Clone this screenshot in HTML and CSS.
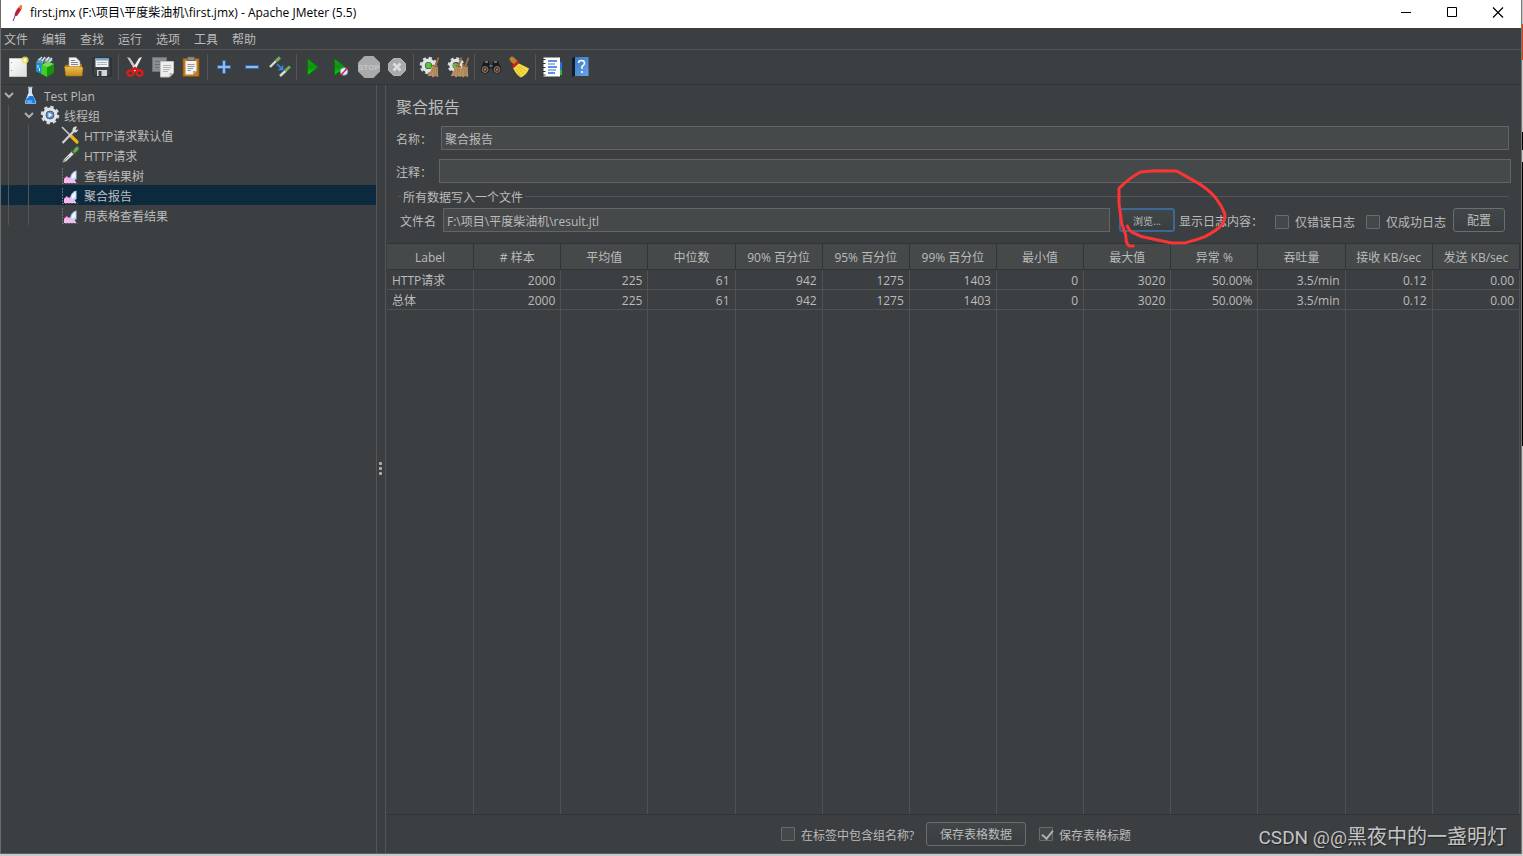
FILE: index.html
```html
<!DOCTYPE html>
<html lang="zh-CN">
<head>
<meta charset="utf-8">
<title>first.jmx - Apache JMeter (5.5)</title>
<link rel="stylesheet" href="styles.css">
</head>
<body>
<svg width="0" height="0" class="defs" aria-hidden="true">
  <defs>
    <linearGradient id="green" x1="0" y1="0" x2="0" y2="1"><stop offset="0" stop-color="#2f9a2f"/><stop offset=".5" stop-color="#0f8f0f"/><stop offset="1" stop-color="#0be00b"/></linearGradient>
    <linearGradient id="paper" x1="0" y1="0" x2="1" y2="1"><stop offset="0" stop-color="#ffffff"/><stop offset="1" stop-color="#dcdcdc"/></linearGradient>
    <linearGradient id="gold" x1="0" y1="0" x2="0" y2="1"><stop offset="0" stop-color="#f0c050"/><stop offset="1" stop-color="#c48a1c"/></linearGradient>
    <linearGradient id="book" x1="0" y1="0" x2="1" y2="1"><stop offset="0" stop-color="#3a78c4"/><stop offset="1" stop-color="#6ba4e8"/></linearGradient>
    <symbol id="gear" viewBox="0 0 20 20">
      <circle cx="10" cy="10" r="8" fill="none" stroke="#d4d8dc" stroke-width="2.600" stroke-dasharray="3.400 2.880"/>
      <circle cx="10" cy="10" r="5.600" fill="none" stroke="#e2e5e8" stroke-width="3.600"/>
    </symbol>
    <symbol id="broom" viewBox="0 0 12 20">
      <path d="M10.800 0.500L8 8" stroke="#a0703c" stroke-width="1.800"/>
      <path d="M5 7L10 8.600L10.500 19L7.500 18L5.500 19.500L4 17.800L0.500 18.400Q4 13 5 7Z" fill="#bd9565"/>
      <path d="M6 10L3.500 17M7.500 10L6.500 18M9 11L8.600 18" stroke="#94704a" stroke-width=".6"/>
      <path d="M5 8L10 9.400" stroke="#7c5830" stroke-width="1"/>
    </symbol>
    <symbol id="chart" viewBox="0 0 20 20">
      <path d="M2.500 3V18.500M2 18.500H18" stroke="#6b6e71" stroke-width="1" stroke-dasharray="2 1"/>
      <path d="M4 18V14L6.500 11.500L9 13L12 13L15 15.500L16.500 18Z" fill="#f6b9ee"/>
      <path d="M4 14L6.500 11.500L9 13L11 12.500" stroke="#dc6fc8" fill="none"/>
      <path d="M10 13Q11 7 16.500 5.500V14L13.500 16Z" fill="#b6d4fb"/>
      <path d="M11.500 13Q12 8.500 15.500 7V12Q13.500 12.500 13 14Z" fill="#f2f8ff"/>
    </symbol>
    <symbol id="pipette" viewBox="0 0 20 20">
      <path d="M2.500 17.500L4 14L11.500 6.500L14 9L6 16.500Z" fill="#dfe4e2" stroke="#555" stroke-width=".6"/>
      <path d="M4 16L9 11" stroke="#8e9693"/>
      <path d="M11 5L16 9.500M12 7.500L14.500 3.500Q17 .5 18.500 2Q20 4 17 6.500L14 8.500Z" fill="#68ae57" stroke="#426f3b"/>
    </symbol>
  </defs>
</svg>

<div class="desktop">
<div class="edge-left"></div>
<div class="window">
  <header class="titlebar">
    <svg class="feather" viewBox="0 0 16 18"><path d="M12 1Q14.500 2 11.500 7L8 12L5.500 11.500Q6 6 12 1Z" fill="#d22128"/><path d="M12 1Q14 2 12 5.500L9 4Z" fill="#f08a24"/><path d="M6 12L4 17M10.500 4L6 12" stroke="#6d2a7d" fill="none"/></svg>
    <h1 class="title">first.jmx (F:\项目\平度柴油机\first.jmx) - Apache JMeter (5.5)</h1>
    <button class="win-btn" aria-label="最小化"><svg viewBox="0 0 12 12"><path d="M1 5.500H11" stroke="#000"/></svg></button>
    <button class="win-btn" aria-label="最大化"><svg viewBox="0 0 12 12"><path d="M1.500 .5H10.500V9.500H1.500Z" stroke="#000" fill="none"/></svg></button>
    <button class="win-btn" aria-label="关闭"><svg viewBox="0 0 12 12"><path d="M1 .5L11 10.500M11 .5L1 10.500" stroke="#000" stroke-width="1.200"/></svg></button>
  </header>

  <nav class="menubar">
    <button>文件</button><button>编辑</button><button>查找</button><button>运行</button><button>选项</button><button>工具</button><button>帮助</button>
  </nav>

  <div class="toolbar" role="toolbar">
    <button aria-label="新建"><svg viewBox="0 0 22 22"><path d="M2.500 2.500H19.500V20.500H2.500Z" fill="url(#paper)" stroke="#c4c4bc"/><path d="M4.500 6V7M4.500 14V15" stroke="#999"/><circle cx="18" cy="4" r="3.600" fill="#ece45c" opacity=".8"/><circle cx="18" cy="4" r="1.600" fill="#fffdd0"/></svg></button>
    <button aria-label="模板"><svg viewBox="0 0 22 22"><path d="M1 7L7 8V18L1 15.500Z" fill="#1f8fd0"/><path d="M1 7L3.500 2L9 4L8 8Z" fill="#5a9fbd"/><path d="M10 2L15 1L18 5L9 7Z" fill="#7c9aa6"/><path d="M4 4L7 1M7 5L10 1M11 5L14 1M14 6L17 2" stroke="#dceaf0" stroke-width="1.300"/><path d="M3 9V12M4.500 12V15" stroke="#d4eefa"/><path d="M6.500 9L12 11.500V21L6.500 18Z" fill="#3fd026"/><path d="M12 11.500L19 8V16.500L12 21Z" fill="#169410"/><path d="M6.500 9L13 5.500L19 8L12 11.500Z" fill="#6fe04c"/></svg></button>
    <button aria-label="打开"><svg viewBox="0 0 22 22"><path d="M2 9V19H19V8H9Z" fill="#a87315"/><path d="M6 1.500H13L17 5.500V14H6Z" fill="#f2f2f2" stroke="#aaa" stroke-width=".6"/><path d="M8 4.500H12M8 6.500H15M8 8.500H15" stroke="#888"/><path d="M1.500 10.500H18.500L20 12L19 20H3Z" fill="url(#gold)" stroke="#a87315" stroke-width=".6"/></svg></button>
    <button aria-label="保存"><svg viewBox="0 0 22 22"><path d="M2 2H20V20H3.500L2 18.500Z" fill="#3d4347" stroke="#25292b"/><path d="M4.500 2H17.500V11H4.500Z" fill="#f1f4f5"/><path d="M4.500 2H17.500V4.500H4.500Z" fill="#7ba3c6"/><path d="M6 6.500H16M6 8.500H16" stroke="#b3b7b9"/><path d="M6 14H16V20H6Z" fill="#d3d6d7"/><path d="M7.500 15H10.500V20H7.500Z" fill="#3d4347"/></svg></button>
    <i class="sep"></i>
    <button aria-label="剪切"><svg viewBox="0 0 22 22"><path d="M3 1L6 2L14.500 14.500L11.500 15.500Z" fill="#c9cccf"/><path d="M18 1L15 2L7.500 14.500L10.500 15.500Z" fill="#eceeef"/><ellipse cx="6.500" cy="17" rx="3" ry="2.700" fill="none" stroke="#e01b1b" stroke-width="2.400"/><ellipse cx="15.500" cy="17" rx="3" ry="2.700" fill="none" stroke="#e01b1b" stroke-width="2.400"/><path d="M8 14.500L11 12L14 14.500" stroke="#d41414" stroke-width="2.400" fill="none"/></svg></button>
    <button aria-label="复制"><svg viewBox="0 0 22 22"><path d="M.5 1.500H14.500V15.500H.5Z" fill="#8b8e90" stroke="#707375"/><path d="M3 5.500H12M3 8.500H12M3 11.500H7" stroke="#6c6f71"/><path d="M8.500 5.500H21.500V17L17.500 21H8.500Z" fill="#eeeeec" stroke="#c0c0bc"/><path d="M11 9.500H19M11 11.500H19M11 13.500H18M11 15.500H16" stroke="#b5b5b5"/><path d="M21.500 17H17.500V21Z" fill="#b8b8b8"/></svg></button>
    <button aria-label="粘贴"><svg viewBox="0 0 22 22"><path d="M3 2.500H19V20.500H3Z" fill="#c07d20" stroke="#855410"/><path d="M5.500 5H16.500V15L13 18.500H5.500Z" fill="#f3f3f1"/><path d="M7.500 8.500H14.500M7.500 10.500H14.500M7.500 12.500H13M7.500 14.500H11" stroke="#9b9b9b"/><path d="M7.500 1H14.500V4.500H7.500Z" fill="#8b8d88" stroke="#5c5e5a" stroke-width=".7"/><path d="M16.500 15H13V18.500Z" fill="#aaa"/></svg></button>
    <i class="sep"></i>
    <button aria-label="展开"><svg viewBox="0 0 22 22"><path d="M9.500 4.500H12.500V9.500H17.500V12.500H12.500V17.500H9.500V12.500H4.500V9.500H9.500Z" fill="#8dbdf0" stroke="#3468aa"/></svg></button>
    <button aria-label="折叠"><svg viewBox="0 0 22 22"><path d="M4.500 9.500H17.500V12.500H4.500Z" fill="#8dbdf0" stroke="#3468aa"/></svg></button>
    <button aria-label="切换"><svg viewBox="0 0 22 22"><path d="M1 11L7 5" stroke="#d5dad7" stroke-width="2.400"/><path d="M7 5L11 1.500" stroke="#71ae5d" stroke-width="3"/><path d="M11 20L17 14.500" stroke="#d5dad7" stroke-width="2.400"/><path d="M16 15L21 10.500" stroke="#71ae5d" stroke-width="3"/><path d="M8 8L13 13M13.500 9.500V13.500H9.500" fill="none" stroke="#3989e8" stroke-width="1.600"/></svg></button>
    <i class="sep"></i>
    <button aria-label="启动"><svg viewBox="0 0 22 22"><path d="M5.500 2.500L16.500 11L5.500 19.500Z" fill="url(#green)" stroke="#087008"/></svg></button>
    <button aria-label="不停顿开始"><svg viewBox="0 0 22 22"><path d="M4.500 2.500L15.500 11L4.500 19.500Z" fill="url(#green)" stroke="#087008"/><circle cx="14" cy="15.500" r="3.800" fill="#e7f0fa" stroke="#6b9bd2"/><path d="M11 19L17.500 12" stroke="#d92424" stroke-width="1.600"/></svg></button>
    <button aria-label="停止" disabled><svg viewBox="0 0 22 22"><path d="M6.500 0H15.500L22 6.500V15.500L15.500 22H6.500L0 15.500V6.500Z" fill="#aaaaaa"/><text x="11" y="14" class="stop-text">STOP</text></svg></button>
    <button aria-label="关闭" disabled><svg viewBox="0 0 22 22"><path d="M7.500 2.500H14.500L19.500 7.500V14.500L14.500 19.500H7.500L2.500 14.500V7.500Z" fill="#aaa" stroke="#b2b2b2"/><path d="M7.500 7.500L14.500 14.500M14.500 7.500L7.500 14.500" stroke="#dedede" stroke-width="2.600"/></svg></button>
    <i class="sep"></i>
    <button aria-label="清除"><svg viewBox="0 0 22 22"><use href="#gear" x="0" y="0" width="19" height="19"/><circle cx="9.500" cy="9.500" r="3" fill="#58c436"/><use href="#broom" x="8" y="1" width="13" height="21"/></svg></button>
    <button aria-label="清除全部"><svg viewBox="0 0 22 22"><use href="#gear" x="0" y="0" width="18" height="19"/><circle cx="8.500" cy="9.500" r="2.600" fill="#58c436"/><use href="#broom" x="3" y="1" width="13" height="21"/><use href="#broom" x="10" y="1" width="13" height="21"/></svg></button>
    <i class="sep"></i>
    <button aria-label="查找"><svg viewBox="0 0 22 22"><path d="M4 5H9L10 9H12L13 5H18L21.500 13Q21 17.500 17 17.500Q12.500 17.500 12 12H10Q9.500 17.500 5 17.500Q1 17.500 .5 13Z" fill="#191b1c"/><path d="M5 6H8M14 6H17" stroke="#8a8a8a" stroke-width="1.500"/><circle cx="5" cy="13.500" r="3" fill="#493227" stroke="#7d7d7d"/><circle cx="17" cy="13.500" r="3" fill="#493227" stroke="#7d7d7d"/><path d="M4 14.500L6 12.500M16 14.500L18 12.500" stroke="#ca7441" stroke-width="1.500"/><path d="M9.500 10H12.500" stroke="#888" stroke-width="1.500"/></svg></button>
    <button aria-label="重置查找"><svg viewBox="0 0 22 22"><path d="M1.500 2.500Q3 -.5 5.500 1L9.500 5L6 8.500L2 5Z" fill="#c08335" stroke="#8a5418" stroke-width=".7"/><path d="M10 7L21 12.500Q19.500 18 13 21.500Q9 20 5 12Z" fill="#f5da42"/><path d="M11 10L18 15M9.500 11L15.500 18M8 12.500L12.500 20" stroke="#d8ae20" stroke-width=".8"/><path d="M5 11L10.500 6" stroke="#d32020" stroke-width="2.600"/></svg></button>
    <i class="sep"></i>
    <button aria-label="函数助手"><svg viewBox="0 0 22 22"><path d="M17 6H21V14H17Z" fill="#2672e0"/><path d="M17 14H21V19H17Z" fill="#37b437"/><path d="M2.500 1.500H19V20.500H2.500Z" fill="#fff"/><path d="M7 5H16M7 11H16M7 17H14" stroke="#2b6bd6" stroke-width="1.500"/><path d="M7 8H14M7 14H15" stroke="#7aa5e6" stroke-width="1.500"/><path d="M1 3.500H4.500M1 7.500H4.500M1 11.500H4.500M1 15.500H4.500M1 19H4.500" stroke="#333" stroke-width="1.200"/></svg></button>
    <button aria-label="帮助"><svg viewBox="0 0 22 22"><path d="M3 2L5 1H19V20H5L3 21Z" fill="#111c2a"/><path d="M6 1H19.500V20H6Z" fill="url(#book)"/><path d="M9.500 7Q9.500 4.500 12.500 4.500Q15.500 4.500 15.500 7.200Q15.500 9 13 10.500V13" fill="none" stroke="#fff" stroke-width="1.500"/><circle cx="13" cy="16" r="1.100" fill="#fff"/></svg></button>
  </div>

  <div class="workspace">
    <aside class="tree" role="tree">
      <div class="node" role="treeitem"><span class="slot"><svg class="chevron" viewBox="0 0 10 10"><path d="M1 3L5 7L9 3"/></svg></span><svg class="icon" viewBox="0 0 20 20"><path d="M8.500 3V8L5 16.500Q4.500 19 6.500 19H14.500Q16.500 19 16 16.500L12 8V3Z" fill="#d5e4f2"/><path d="M7.500 11L5.500 17Q5 18.500 6.500 18.500H14.500Q16 18.500 15.500 17L13.200 11Z" fill="#1f78dc"/><path d="M8 2.500H12.500" stroke="#aac0d2" stroke-width="1.500"/><ellipse cx="9.500" cy="16.500" rx="3" ry="1.500" fill="#5caaf3"/><path d="M9 9L7.500 13" stroke="#fff"/></svg><span class="name">Test Plan</span></div>
      <div class="node" role="treeitem"><i class="guide"></i><span class="slot"><svg class="chevron" viewBox="0 0 10 10"><path d="M1 3L5 7L9 3"/></svg></span><svg class="icon" viewBox="0 0 20 20"><use href="#gear" width="20" height="20"/><circle cx="10" cy="10" r="4" fill="#5c8fca" stroke="#45617f"/><path d="M8.500 7.500L12.500 10L8.500 12.500Z" fill="#e8f2ff"/></svg><span class="name">线程组</span></div>
      <div class="node" role="treeitem"><i class="guide"></i><i class="guide"></i><span class="slot"></span><svg class="icon" viewBox="0 0 20 20"><path d="M2 2L11 11" stroke="#c9cccd" stroke-width="1.500"/><path d="M10.500 10.500L17 17" stroke="#eeb41a" stroke-width="3.200" stroke-linecap="round"/><path d="M2.500 18L14 6" stroke="#cfd2d3" stroke-width="2.200"/><path d="M17 1.500Q12 1 12.500 6Q16 9.500 18.500 4.500L15.500 5Z" fill="#d9dcdd"/></svg><span class="name">HTTP请求默认值</span></div>
      <div class="node" role="treeitem"><i class="guide"></i><i class="guide"></i><span class="slot"></span><svg class="icon"><use href="#pipette"/></svg><span class="name">HTTP请求</span></div>
      <div class="node" role="treeitem"><i class="guide"></i><i class="guide"></i><span class="slot"></span><svg class="icon"><use href="#chart"/></svg><span class="name">查看结果树</span></div>
      <div class="node selected" role="treeitem" aria-selected="true"><i class="guide"></i><i class="guide"></i><span class="slot"></span><svg class="icon"><use href="#chart"/></svg><span class="name">聚合报告</span></div>
      <div class="node" role="treeitem"><i class="guide"></i><i class="guide"></i><span class="slot"></span><svg class="icon"><use href="#chart"/></svg><span class="name">用表格查看结果</span></div>
    </aside>
    <div class="splitter"><i></i><i></i><i></i></div>

    <main class="report">
      <h2 class="heading">聚合报告</h2>
      <div class="field name-field"><label for="name">名称：</label><input id="name" type="text" value="聚合报告"></div>
      <div class="field comment-field"><label for="comment">注释：</label><input id="comment" type="text"></div>
      <div class="group-title"><span>所有数据写入一个文件</span></div>
      <div class="file-row">
        <label for="file">文件名</label>
        <input id="file" type="text" value="F:\项目\平度柴油机\result.jtl">
        <div class="browse-wrap">
          <button class="btn browse">浏览...</button>
          <svg class="scribble" viewBox="105 21 342 252" aria-hidden="true"><path d="M142 198Q148 215 165 221Q182 231 205 234L275 249L318 248Q350 240 375 230Q415 208 425 195Q437 178 434 160Q425 137 408 115Q390 92 362 74L320 50L290 33L225 32L182 36Q150 52 117 85L117 130L125 190L137 225L139 245L146 257L160 258"/></svg>
        </div>
        <span class="log-label">显示日志内容：</span>
        <label class="check"><input type="checkbox"><span>仅错误日志</span></label>
        <label class="check"><input type="checkbox"><span>仅成功日志</span></label>
        <button class="btn config">配置</button>
      </div>
      <div class="table-wrap">
        <table>
          <thead><tr><th>Label</th><th># 样本</th><th>平均值</th><th>中位数</th><th>90% 百分位</th><th>95% 百分位</th><th>99% 百分位</th><th>最小值</th><th>最大值</th><th>异常 %</th><th>吞吐量</th><th>接收 KB/sec</th><th>发送 KB/sec</th></tr></thead>
          <tbody>
            <tr><td>HTTP请求</td><td>2000</td><td>225</td><td>61</td><td>942</td><td>1275</td><td>1403</td><td>0</td><td>3020</td><td>50.00%</td><td>3.5/min</td><td>0.12</td><td>0.00</td></tr>
            <tr><td>总体</td><td>2000</td><td>225</td><td>61</td><td>942</td><td>1275</td><td>1403</td><td>0</td><td>3020</td><td>50.00%</td><td>3.5/min</td><td>0.12</td><td>0.00</td></tr>
            <tr class="filler" aria-hidden="true"><td></td><td></td><td></td><td></td><td></td><td></td><td></td><td></td><td></td><td></td><td></td><td></td><td></td></tr>
          </tbody>
        </table>
      </div>
      <footer class="actions">
        <label class="check"><input type="checkbox"><span>在标签中包含组名称?</span></label>
        <button class="btn save">保存表格数据</button>
        <label class="check"><input type="checkbox" checked><span>保存表格标题</span></label>
        <div class="watermark">CSDN @@<span>黑夜中的一盏明灯</span></div>
      </footer>
    </main>
  </div>
</div>
<div class="edge-right"></div>
</div>
</body>
</html>
```

FILE: styles.css
```css
* { box-sizing: border-box; }
body {
  margin: 0;
  background: #c8c8c8;
  color: #bbbbbb;
  font: 12px/16px "Open Sans", "Noto Sans CJK SC", sans-serif;
}
button, input { font: inherit; color: inherit; }
button { padding: 0; border: 0; background: none; }
.defs { position: absolute; }

.desktop { display: flex; height: 100vh; padding-bottom: 2px; }
.edge-left { width: 1px; background: #6b6b6b; }
.edge-right {
  width: 2px;
  border-left: 1px solid #77787a;
  background: linear-gradient(#c8c8c8 24px, #d8431b 24px 60px, #c8c8c8 60px 132px, #000 132px 150px, #c8c8c8 150px 162px, #000 162px 446px, #c8c8c8 446px);
}
.window {
  flex: 1;
  min-width: 0;
  display: flex;
  flex-direction: column;
  background: #3c3f41;
  border-bottom: 1px solid #5c5f61;
}

.titlebar { display: flex; align-items: center; height: 28px; padding-bottom: 2px; background: #fff; color: #000; }
.feather { width: 16px; height: 18px; margin: 0 5px 0 8px; }
.title { flex: 1; margin: 0; font-size: 12px; font-weight: 400; }
.win-btn { display: flex; justify-content: center; align-items: center; width: 46px; height: 26px; }
.win-btn svg { width: 12px; height: 12px; }

.menubar { display: flex; height: 22px; border-bottom: 1px solid #555555; padding: 2px 0 0 3px; gap: 14px; }

.toolbar { display: flex; align-items: center; height: 35px; padding-left: 3px; border-bottom: 1px solid #323537; }
.toolbar button { display: flex; justify-content: center; width: 28px; }
.toolbar svg { width: 22px; height: 22px; }
.sep { width: 1px; height: 26px; margin: 0 2px; background: #555555; }
.stop-text { font: 700 8px "Liberation Sans", sans-serif; fill: #c6c6c6; text-anchor: middle; }

.workspace { flex: 1; min-height: 0; display: flex; }
.tree { width: 375px; }
.node { display: flex; align-items: center; height: 20px; }
.node.selected { background: #0d293e; }
.name { padding-top: 3px; }
.slot { display: flex; justify-content: center; width: 19px; padding-right: 4px; }
.chevron { width: 10px; height: 10px; fill: none; stroke: #adadad; stroke-width: 2; }
.guide { width: 20px; height: 20px; background: linear-gradient(#555555, #555555) 7px 0 / 1px 100% no-repeat; }
.icon { width: 20px; height: 20px; margin-right: 4px; }
.splitter {
  display: flex;
  flex-direction: column;
  justify-content: center;
  align-items: center;
  gap: 2px;
  width: 10px;
  padding: 0 1px 1px 0;
  border: solid #555555;
  border-width: 0 1px;
}
.splitter i { width: 3px; height: 3px; border-radius: 1px; background: #adadad; }

.report { flex: 1; min-width: 0; display: flex; flex-direction: column; }
.heading { margin: 10px 0 7px 10px; font-size: 16px; line-height: 24px; font-weight: 400; }
.field { display: flex; align-items: center; padding-left: 10px; }
.field label, .file-row > label, .log-label, .check span { padding-top: 3px; }
.name-field { gap: 9px; padding-right: 12px; margin-bottom: 9px; }
.comment-field { gap: 7px; padding-right: 10px; }
input[type="text"] {
  flex: 1;
  min-width: 0;
  height: 24px;
  padding: 2px 3px 0;
  border: 1px solid #646464;
  background: #45494a;
}
.group-title { display: flex; align-items: center; gap: 2px; height: 25px; padding: 2px 12px 0 12px; }
.group-title span { padding-top: 2px; }
.group-title::before { content: ""; width: 3px; height: 1px; background: #555555; }
.group-title::after { content: ""; flex: 1; height: 1px; background: #555555; }
.file-row { display: flex; align-items: center; padding: 0 16px 0 14px; margin-bottom: 11px; }
.file-row > input { margin: 0 9px 0 7px; }
.browse-wrap { position: relative; display: flex; }
.btn { height: 24px; padding-top: 2px; border: 1px solid #6b6d6e; border-radius: 3px; background: linear-gradient(#414748, #393f40); }
.browse { width: 56px; border: 2px solid #3d6794; font-size: 10px; }
.scribble { position: absolute; left: -4px; top: -41px; width: 114px; height: 84px; fill: none; stroke: #fb3535; stroke-width: 9; stroke-linecap: round; stroke-linejoin: round; pointer-events: none; }
.log-label { margin: 0 12px 0 4px; }
.check { display: flex; align-items: center; gap: 6px; }
.file-row .check { margin-right: 11px; }
.file-row .config { width: 52px; margin-left: -4px; }
.check input {
  appearance: none;
  width: 14px;
  height: 14px;
  margin: 0;
  border: 1px solid #6b6b6b;
  border-radius: 1px;
  background: #43494a;
}
.check input:checked::before {
  content: "";
  display: block;
  width: 5px;
  height: 9px;
  margin: 0 0 0 4px;
  border: solid #b0b0b0;
  border-width: 0 2px 2px 0;
  transform: rotate(40deg);
}

.table-wrap { flex: 1; min-height: 0; display: flex; padding: 0 1px; border-bottom: 1px solid #323537; }
table { width: 100%; height: 100%; table-layout: fixed; border-collapse: separate; border-spacing: 0; }
th {
  height: 27px;
  padding: 3px 0 0;
  font-weight: 400;
  background: #45494a;
  border: solid #323537;
  border-width: 1px 1px 1px 0;
}
td { height: 20px; padding: 2px 5px 0; text-align: right; border: solid #4f5254; border-width: 0 1px 1px 0; }
td:first-child { text-align: left; }
th, td { white-space: nowrap; }
.filler td { height: auto; border-bottom: 0; }

.actions { position: relative; display: flex; align-items: center; justify-content: center; height: 38px; padding-left: 5px; }
.save { width: 100px; margin: 0 13px 0 12px; }
.watermark {
  position: absolute;
  right: 14px;
  bottom: 2px;
  font: 19px/26px Roboto, sans-serif;
  color: #c4c5c6;
  text-shadow: 1px 1px 1px #222;
}
.watermark span { font: 20px/26px "Noto Sans CJK SC", sans-serif; }
```
